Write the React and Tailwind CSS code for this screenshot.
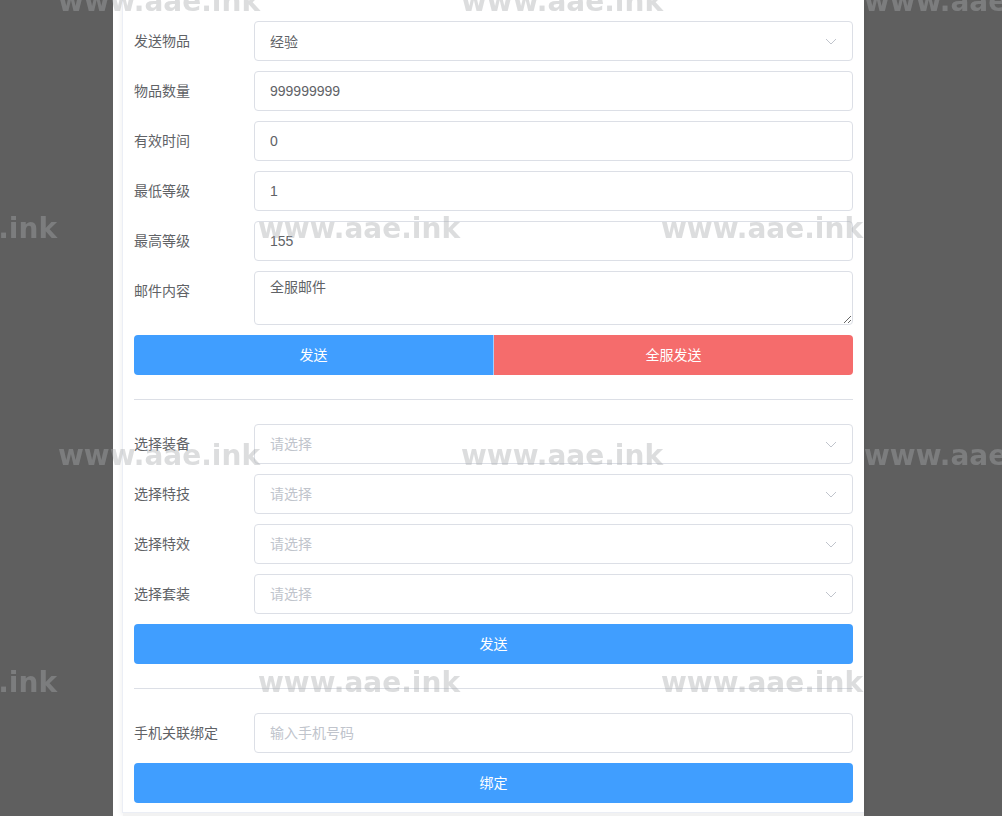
import React from 'react';

const font = { fontFamily: '"Liberation Sans", "Noto Sans CJK SC", sans-serif' };

const Chevron = () => (
  <svg className="absolute right-[16px] top-1/2 -translate-y-1/2 w-[12px] h-[12px] pointer-events-none" viewBox="0 0 12 12" fill="none">
    <polyline points="1,4 6,9 11,4" stroke="#c0c4cc" strokeWidth="1" />
  </svg>
);

const Row = ({ label, children }) => (
  <div className="flex items-center">
    <label className="w-[120px] shrink-0 text-[14px] text-[#606266]">{label}</label>
    <div className="flex-1 relative">{children}</div>
  </div>
);

const inputCls =
  'w-full h-[40px] px-[15px] border border-[#dcdfe6] rounded-[4px] text-[14px] text-[#606266] placeholder:text-[#c0c4cc] outline-none bg-white';

const TextInput = ({ value, placeholder }) => (
  <input className={inputCls} style={font} defaultValue={value} placeholder={placeholder} />
);

const SelectInput = ({ value, placeholder }) => (
  <>
    <input readOnly className={inputCls + ' pr-[30px] cursor-pointer'} style={font} defaultValue={value} placeholder={placeholder} />
    <Chevron />
  </>
);

const Divider = () => <div className="h-px bg-[#dcdfe6] my-[24px]" />;

const marks = [
  { top: -12, lefts: [58, 461, 864] },
  { top: 215, lefts: [-145, 258, 661] },
  { top: 442, lefts: [58, 461, 864] },
  { top: 669, lefts: [-145, 258, 661] },
];

const Watermarks = () => (
  <div className="fixed inset-0 overflow-hidden pointer-events-none">
    {marks.map((r, i) =>
      r.lefts.map((l) => (
        <span
          key={i + '-' + l}
          className="absolute whitespace-nowrap text-[28px] font-bold leading-none text-[rgba(168,170,172,0.4)]"
          style={{ top: r.top, left: l, fontFamily: '"DejaVu Sans", sans-serif' }}
        >
          www.aae.ink
        </span>
      ))
    )}
  </div>
);

export default function App() {
  return (
    <div className="min-h-[816px] h-[816px] overflow-hidden bg-[#5f5f5f] flex" style={font}>
      <div className="ml-[113px] w-[751px] bg-white pl-[9px] flex flex-col">
        <div className="border border-r-0 border-t-0 border-[#ebeef5] shadow-[0_2px_6px_rgba(0,0,0,0.08)] px-[11px] pt-[21px] pb-[9px]">
          <div className="flex flex-col gap-[10px]">
            <Row label="发送物品"><SelectInput value="经验" /></Row>
            <Row label="物品数量"><TextInput value="999999999" /></Row>
            <Row label="有效时间"><TextInput value="0" /></Row>
            <Row label="最低等级"><TextInput value="1" /></Row>
            <Row label="最高等级"><TextInput value="155" /></Row>
            <div className="flex items-start">
              <label className="w-[120px] shrink-0 text-[14px] text-[#606266] pt-[10px]">邮件内容</label>
              <textarea
                className="flex-1 h-[54px] px-[15px] py-[5px] border border-[#dcdfe6] rounded-[4px] text-[14px] leading-[1.5] text-[#606266] outline-none resize-y"
                style={font}
                defaultValue="全服邮件"
              />
            </div>
            <div className="flex h-[40px] text-[14px] text-white">
              <button className="flex-1 bg-[#409eff] rounded-l-[4px] border-r border-[rgba(255,255,255,0.5)]">发送</button>
              <button className="flex-1 bg-[#f56c6c] rounded-r-[4px]">全服发送</button>
            </div>
          </div>

          <Divider />

          <div className="flex flex-col gap-[10px]">
            <Row label="选择装备"><SelectInput placeholder="请选择" /></Row>
            <Row label="选择特技"><SelectInput placeholder="请选择" /></Row>
            <Row label="选择特效"><SelectInput placeholder="请选择" /></Row>
            <Row label="选择套装"><SelectInput placeholder="请选择" /></Row>
            <button className="h-[40px] bg-[#409eff] rounded-[4px] text-[14px] text-white">发送</button>
          </div>

          <Divider />

          <div className="flex flex-col gap-[10px]">
            <Row label="手机关联绑定"><TextInput placeholder="输入手机号码" /></Row>
            <button className="h-[40px] bg-[#409eff] rounded-[4px] text-[14px] text-white">绑定</button>
          </div>
        </div>
        <div className="flex-1 bg-[#f2f2f2] ml-[1px]" />
      </div>
      <Watermarks />
    </div>
  );
}
